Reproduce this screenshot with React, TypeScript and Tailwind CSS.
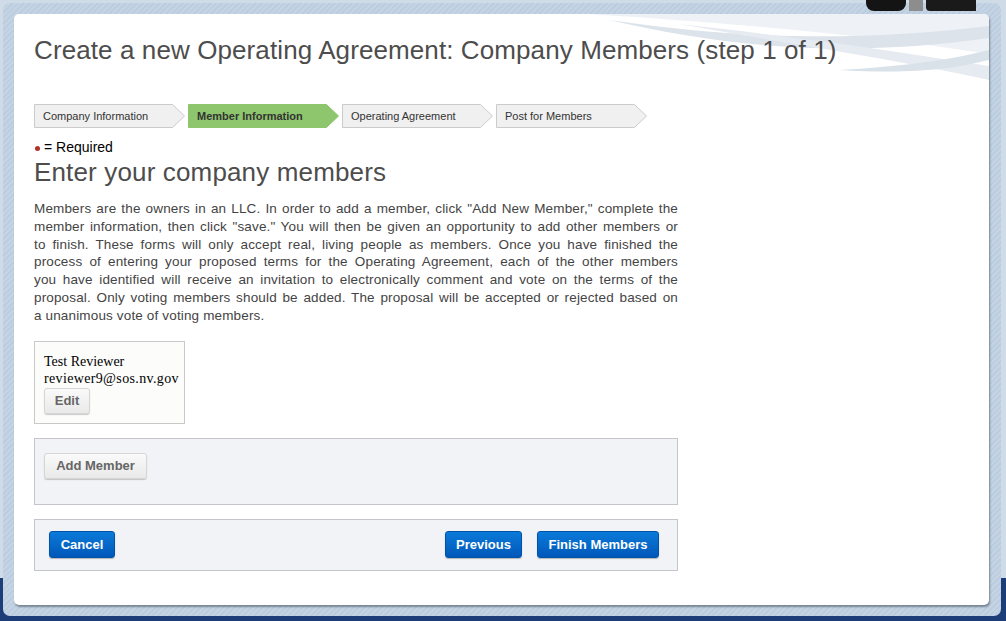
import React from 'react';

const steps = [
  { label: 'Company Information', active: false },
  { label: 'Member Information', active: true },
  { label: 'Operating Agreement', active: false },
  { label: 'Post for Members', active: false },
];

// lines broken as in the original page
const introLines = [
  'Members are the owners in an LLC. In order to add a member, click "Add New Member," complete the',
  'member information, then click "save." You will then be given an opportunity to add other members or',
  'to finish. These forms will only accept real, living people as members. Once you have finished the',
  'process of entering your proposed terms for the Operating Agreement, each of the other members',
  'you have identified will receive an invitation to electronically comment and vote on the terms of the',
  'proposal. Only voting members should be added. The proposal will be accepted or rejected based on',
  'a unanimous vote of voting members.',
];

const StepChevron: React.FC<{ label: string; active: boolean }> = ({ label, active }) => (
  <div className="relative w-[151px] h-[24px] flex items-center">
    <svg className="absolute inset-0" width="151" height="24" viewBox="0 0 151 24">
      <polygon
        points="0.5,0.5 138.5,0.5 150.5,12 138.5,23.5 0.5,23.5"
        fill={active ? '#8dc66c' : '#f0f0f0'}
        stroke={active ? '#8dc66c' : '#cbcbcb'}
        strokeWidth="1"
      />
    </svg>
    <span className={`relative pl-[9px] text-[11px] text-[#333] ${active ? 'font-bold' : ''}`}>{label}</span>
  </div>
);

const BlueButton: React.FC<{ children: React.ReactNode; w: string }> = ({ children, w }) => (
  <button
    className={`${w} h-[27px] rounded-[3px] border border-[#0052a8] bg-[linear-gradient(#0b7ad9,#0058b9)] text-white text-[13px] font-bold shadow-[0_1px_1px_rgba(0,0,0,0.25)]`}
  >
    {children}
  </button>
);

const GreyButton: React.FC<{ children: React.ReactNode; w: string }> = ({ children, w }) => (
  <button
    className={`${w} h-[26px] rounded-[3px] border border-[#d6d6d6] bg-[linear-gradient(#fafafa,#e9e9e9)] text-[#666] text-[13px] font-bold shadow-[0_1px_1px_rgba(0,0,0,0.2)]`}
  >
    {children}
  </button>
);

export default function App() {
  return (
    <div className="relative w-full h-[621px] overflow-hidden font-['Liberation_Sans',Arial,sans-serif] bg-[linear-gradient(to_bottom,#cfdbe7_0,#cfdbe7_578px,#1d3d79_578px)]">
      {/* dark photo edge peeking over the top */}
      <div className="absolute left-[866px] top-0 w-[110px] h-[11px] z-10 flex gap-[3px]">
        <div className="w-[40px] h-full bg-[#141414] rounded-b-[8px]" />
        <div className="w-[14px] h-full bg-[#8d8d8d]" />
        <div className="flex-1 h-full bg-[#1a1a1a] rounded-bl-[4px]" />
      </div>

      <div className="ml-[3px] mt-[3px] w-[998px] h-[613px] rounded-[7px] pt-[11px] pl-[11px] pr-[12px] pb-[11px] bg-[repeating-linear-gradient(135deg,#c4d4e4_0,#c4d4e4_2px,#bccddf_2px,#bccddf_4px)]">
        <div className="relative w-full h-full bg-white rounded-[5px] shadow-[1px_2px_2px_rgba(60,70,80,0.55)] overflow-hidden pt-[20px] pl-[20px]">
          {/* decorative swoosh */}
          <svg className="absolute right-0 top-0" width="400" height="80" viewBox="0 0 400 80">
            <path d="M0,0 C120,8 260,18 400,40 L400,0 Z" fill="#eef2f6" />
            <path d="M20,6 C130,22 250,30 400,12 L400,24 C260,44 140,34 20,6 Z" fill="#dce3eb" />
            <path d="M90,10 C200,30 300,44 400,66 L400,52 C300,36 200,22 90,10 Z" fill="#e6ebf1" />
            <path d="M250,56 C320,52 360,46 400,36 L400,46 C360,56 320,60 250,56 Z" fill="#d9e1e9" />
          </svg>

          <h1 className="relative text-[26px] leading-[32px] text-[#4d4d4d] font-normal tracking-[0.1px]">
            Create a new Operating Agreement: Company Members (step 1 of 1)
          </h1>

          <div className="mt-[38px] flex gap-[3px]">
            {steps.map(s => (
              <StepChevron key={s.label} label={s.label} active={s.active} />
            ))}
          </div>

          <div className="mt-[10px] flex items-center h-[18px] text-[14px] text-black">
            <span className="inline-block w-[5px] h-[5px] rounded-full bg-[#b0302a] ml-[1px] mr-[4px] mt-[3px]" />
            <span>= Required</span>
          </div>

          <h2 className="mt-[1px] text-[26px] leading-[30px] text-[#4d4d4d] font-normal tracking-[0.15px]">
            Enter your company members
          </h2>

          <p className="mt-[13px] w-[644px] text-[13.5px] leading-[17.8px] tracking-[0.15px] text-[#444]">
            {introLines.map((line, i) => (
              <span
                key={i}
                className={`block whitespace-nowrap ${i < introLines.length - 1 ? 'text-justify [text-align-last:justify]' : ''}`}
              >
                {line}
              </span>
            ))}
          </p>

          <div className="mt-[16px] w-[151px] h-[83px] border border-[#c9c9c9] bg-[#fcfcfb] pt-[11px] pl-[9px] font-['Liberation_Serif',serif] text-[14px] leading-[17px] text-black">
            <div>Test Reviewer</div>
            <div className="tracking-[0.35px]">reviewer9@sos.nv.gov</div>
            <div className="pt-[1px] font-['Liberation_Sans',Arial,sans-serif]">
              <GreyButton w="w-[46px]">Edit</GreyButton>
            </div>
          </div>

          <div className="mt-[14px] w-[644px] h-[67px] border border-[#c3c5cb] bg-[#f2f3f6] pt-[14px] pl-[9px]">
            <GreyButton w="w-[103px]">Add Member</GreyButton>
          </div>

          <div className="mt-[14px] w-[644px] h-[52px] border border-[#c3c5cb] bg-[#f2f3f6] flex items-center pl-[14px] pr-[18px]">
            <BlueButton w="w-[66px]">Cancel</BlueButton>
            <div className="flex-1" />
            <div className="flex gap-[15px]">
              <BlueButton w="w-[77px]">Previous</BlueButton>
              <BlueButton w="w-[122px]">Finish Members</BlueButton>
            </div>
          </div>
        </div>
      </div>
    </div>
  );
}
